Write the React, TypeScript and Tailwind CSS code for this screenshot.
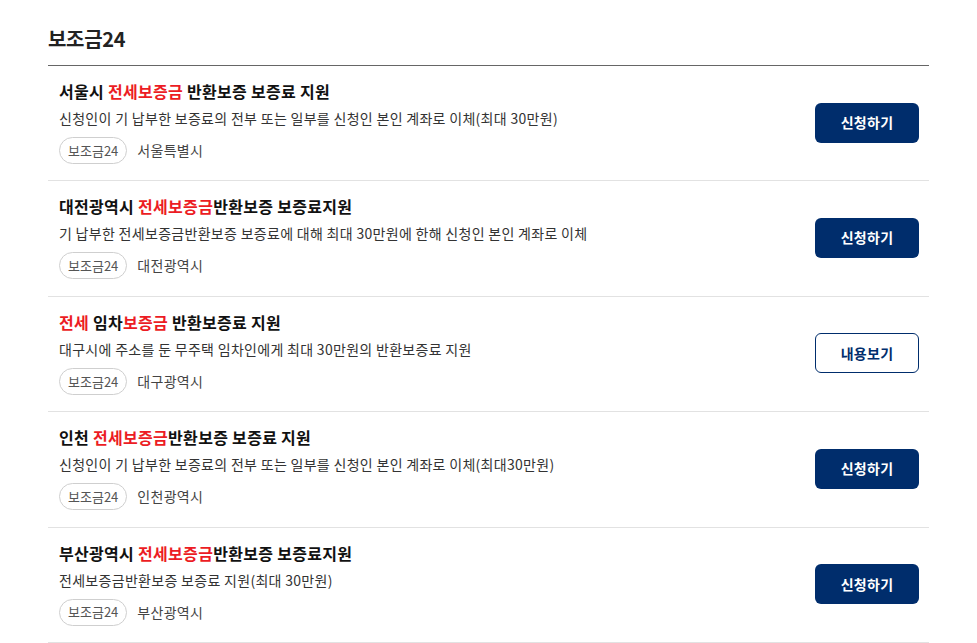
type Part = { text: string; red?: boolean }

type Item = {
  title: Part[]
  desc: string
  region: string
  action: 'apply' | 'view'
}

const items: Item[] = [
  {
    title: [{ text: '서울시 ' }, { text: '전세보증금', red: true }, { text: ' 반환보증 보증료 지원' }],
    desc: '신청인이 기 납부한 보증료의 전부 또는 일부를 신청인 본인 계좌로 이체(최대 30만원)',
    region: '서울특별시',
    action: 'apply',
  },
  {
    title: [{ text: '대전광역시 ' }, { text: '전세보증금', red: true }, { text: '반환보증 보증료지원' }],
    desc: '기 납부한 전세보증금반환보증 보증료에 대해 최대 30만원에 한해 신청인 본인 계좌로 이체',
    region: '대전광역시',
    action: 'apply',
  },
  {
    title: [
      { text: '전세', red: true },
      { text: ' 임차' },
      { text: '보증금', red: true },
      { text: ' 반환보증료 지원' },
    ],
    desc: '대구시에 주소를 둔 무주택 임차인에게 최대 30만원의 반환보증료 지원',
    region: '대구광역시',
    action: 'view',
  },
  {
    title: [{ text: '인천 ' }, { text: '전세보증금', red: true }, { text: '반환보증 보증료 지원' }],
    desc: '신청인이 기 납부한 보증료의 전부 또는 일부를 신청인 본인 계좌로 이체(최대30만원)',
    region: '인천광역시',
    action: 'apply',
  },
  {
    title: [{ text: '부산광역시 ' }, { text: '전세보증금', red: true }, { text: '반환보증 보증료지원' }],
    desc: '전세보증금반환보증 보증료 지원(최대 30만원)',
    region: '부산광역시',
    action: 'apply',
  },
]

function Row({ item }: { item: Item }) {
  return (
    <li className="flex items-center border-b border-[#e2e2e2] pl-[11px] pr-[10px] pt-[15px] pb-[16.4px]">
      <div className="flex-1 min-w-0">
        <p className="text-[16px] leading-[20px] font-bold text-[#111] tracking-[0.3px]">
          {item.title.map((p, i) => (
            <span key={i} className={p.red ? 'text-[#ec1c24]' : undefined}>
              {p.text}
            </span>
          ))}
        </p>
        <p className="mt-[8px] text-[14px] leading-[18px] text-[#333] tracking-[0.3px]">{item.desc}</p>
        <div className="mt-[10px] flex items-center gap-[10px]">
          <span className="h-[27px] px-[8px] flex items-center rounded-full border border-[#cfcfcf] text-[13px] text-[#555]">
            보조금24
          </span>
          <span className="text-[14px] text-[#444] tracking-[0.3px]">{item.region}</span>
        </div>
      </div>
      {item.action === 'apply' ? (
        <button className="w-[104px] h-[40px] rounded-[6px] bg-[#002d6c] text-white text-[14px] font-bold tracking-[0.3px]">
          신청하기
        </button>
      ) : (
        <button className="w-[104px] h-[40px] rounded-[6px] border border-[#002d6c] bg-white text-[#002d6c] text-[14px] font-bold tracking-[0.3px]">
          내용보기
        </button>
      )}
    </li>
  )
}

export default function App() {
  return (
    <div
      className="min-h-screen bg-white px-[48px] pt-[24px]"
      style={{ fontFamily: '"Noto Sans CJK KR", "Noto Sans", sans-serif' }}
    >
      <div className="w-[881px]">
        <h2 className="text-[20px] leading-[30px] font-bold text-[#222] tracking-[-0.3px] pb-[11px] border-b border-[#666]">
          보조금24
        </h2>
        <ul>
          {items.map((item, i) => (
            <Row key={i} item={item} />
          ))}
        </ul>
      </div>
    </div>
  )
}
